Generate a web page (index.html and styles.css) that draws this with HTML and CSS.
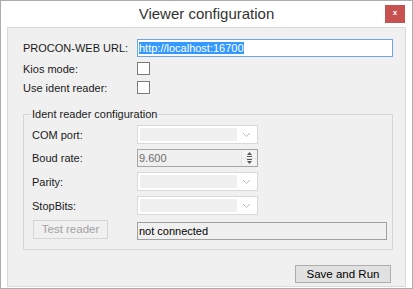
FILE: index.html
```html
<!DOCTYPE html>
<html>

<head>
    <title>Viewer configuration</title>
    <link rel="stylesheet" href="styles.css">
</head>

<body>
    <div class="window">
        <div class="titlebar">
            <span class="title">Viewer configuration</span>
            <span class="closeBtn">x</span>
        </div>
        <div class="client">
            <div class="formRow rowUrl">
                <span class="label">PROCON-WEB URL:</span>
                <span class="textBox urlBox"><span class="selected">http://localhost:16700</span></span>
            </div>
            <div class="formRow rowCheck">
                <span class="label">Kios mode:</span>
                <span class="checkBox"></span>
            </div>
            <div class="formRow rowCheck">
                <span class="label">Use ident reader:</span>
                <span class="checkBox"></span>
            </div>

            <fieldset class="groupBox">
                <legend>Ident reader configuration</legend>
                <div class="groupGrid">
                    <span class="label">COM port:</span>
                    <span class="combo"><span class="comboText"></span><span class="comboArrow"><svg width="9" height="6" viewBox="0 0 9 6"><path d="M1 1 L4.5 4.5 L8 1" fill="none" stroke="#b8b8b8" stroke-width="1"/></svg></span></span>

                    <span class="label">Boud rate:</span>
                    <span class="numeric">
                        <span class="numText">9.600</span>
                        <span class="spin">
                            <span class="spinBtn"><svg width="7" height="5" viewBox="0 0 7 5"><path d="M3.5 0 L6 3 L1 3 Z" fill="#555"/><rect x="1" y="4" width="5" height="1" fill="#555"/></svg></span>
                            <span class="spinBtn"><svg width="7" height="5" viewBox="0 0 7 5"><rect x="1" y="0" width="5" height="1" fill="#555"/><path d="M1 2 L6 2 L3.5 5 Z" fill="#555"/></svg></span>
                        </span>
                    </span>

                    <span class="label">Parity:</span>
                    <span class="combo"><span class="comboText"></span><span class="comboArrow"><svg width="9" height="6" viewBox="0 0 9 6"><path d="M1 1 L4.5 4.5 L8 1" fill="none" stroke="#b8b8b8" stroke-width="1"/></svg></span></span>

                    <span class="label">StopBits:</span>
                    <span class="combo"><span class="comboText"></span><span class="comboArrow"><svg width="9" height="6" viewBox="0 0 9 6"><path d="M1 1 L4.5 4.5 L8 1" fill="none" stroke="#b8b8b8" stroke-width="1"/></svg></span></span>

                    <span class="button disabled">Test reader</span>
                    <span class="textBox statusBox">not connected</span>
                </div>
            </fieldset>

            <div class="footer">
                <span class="button saveBtn">Save and Run</span>
            </div>
        </div>
    </div>
</body>

</html>
```

FILE: styles.css
```css
body {
    margin: 0;
    background: #ffffff;
    font-family: 'Liberation Sans', Arial, sans-serif;
    font-size: 11px;
    color: #1a1a1a;
}

.window {
    /* frame */
    width: 413px;
    height: 289px;
    box-sizing: border-box;
    border: 1px solid #acacac;
    background: #ffffff;
    display: flex;
    flex-direction: column;
}

.titlebar {
    height: 26px;
    display: grid;
    grid-template-columns: 1fr auto 1fr;
}

.title {
    grid-column: 2;
    font-size: 15px;
    line-height: 26px;
    color: #333333;
}

.closeBtn {
    grid-column: 3;
    justify-self: end;
    align-self: start;
    margin: 4px 7px 0 0;
    width: 20px;
    height: 18px;
    background: #c75050;
    color: #ffffff;
    font-size: 8px;
    font-weight: bold;
    line-height: 16px;
    text-align: center;
}

.client {
    flex: 1;
    margin: 0 6px 1px 6px;
    border: 1px solid #dadada;
    background: #f0f0f0;
    padding: 11px 0 0 15px;
    display: flex;
    flex-direction: column;
}

/* top rows */
.formRow {
    display: flex;
    align-items: center;
}

.formRow .label {
    width: 114px;
}

.rowUrl {
    height: 18px;
}

.rowCheck {
    height: 19px;
}

.rowUrl + .rowCheck {
    margin-top: 2px;
}

.textBox {
    box-sizing: border-box;
    height: 18px;
    line-height: 16px;
    padding-left: 1px;
    border: 1px solid #a0a0a0;
    background: #f0f0f0;
    white-space: nowrap;
}

.urlBox {
    width: 256px;
    border-color: #6aa6e8;
    background: #ffffff;
}

.selected {
    background: #3399ff;
    color: #ffffff;
}

.checkBox {
    box-sizing: border-box;
    width: 13px;
    height: 13px;
    border: 1px solid #7a7a7a;
    background: #ffffff;
}

/* group box */
.groupBox {
    margin: 11px 0 0 0;
    width: 370px;
    box-sizing: border-box;
    border: 1px solid #d5d5d5;
    padding: 4px 5px 9px 8px;
    min-width: 0;
}

.groupBox legend {
    padding: 0 1px;
    margin-left: -1px;
    line-height: 13px;
    color: #1a1a1a;
}

.groupGrid {
    display: grid;
    grid-template-columns: 105px 1fr;
    grid-auto-rows: auto;
    row-gap: 5px;
    align-items: center;
}

.combo {
    box-sizing: border-box;
    width: 121px;
    height: 19px;
    border: 1px solid #d9d9d9;
    background: #ffffff;
    padding: 2px;
    display: flex;
}

.comboText {
    flex: 1;
    background: #f0f0f0;
}

.comboArrow {
    width: 18px;
    display: flex;
    align-items: center;
    justify-content: center;
}

.numeric {
    box-sizing: border-box;
    width: 121px;
    height: 18px;
    border: 1px solid #a5a5a5;
    background: #f0f0f0;
    display: flex;
}

.numText {
    flex: 1;
    padding-left: 1px;
    line-height: 16px;
    color: #6d6d6d;
}

.spin {
    width: 14px;
    margin: 1px 1px 1px 0;
    display: flex;
    flex-direction: column;
    border-left: 1px solid #e3e3e3;
}

.spinBtn {
    flex: 1;
    display: flex;
    align-items: center;
    justify-content: center;
    background: #f4f4f4;
}

.spinBtn + .spinBtn {
    border-top: 1px solid #e3e3e3;
}

.button {
    box-sizing: border-box;
    height: 19px;
    border: 1px solid #adadad;
    background: #e1e1e1;
    text-align: center;
    line-height: 17px;
    font-size: 11.5px;
}

.button.disabled {
    width: 75px;
    margin-left: 1px;
    border-color: #d5d5d5;
    background: #f0f0f0;
    color: #a2a2a2;
    align-self: start;
}

.statusBox {
    width: 250px;
    align-self: start;
    margin-top: 2px;
    color: #000000;
}

.footer {
    display: flex;
    justify-content: flex-end;
    padding: 15px 14px 0 0;
}

.saveBtn {
    width: 96px;
    height: 18px;
    line-height: 16px;
    color: #000000;
}
```
